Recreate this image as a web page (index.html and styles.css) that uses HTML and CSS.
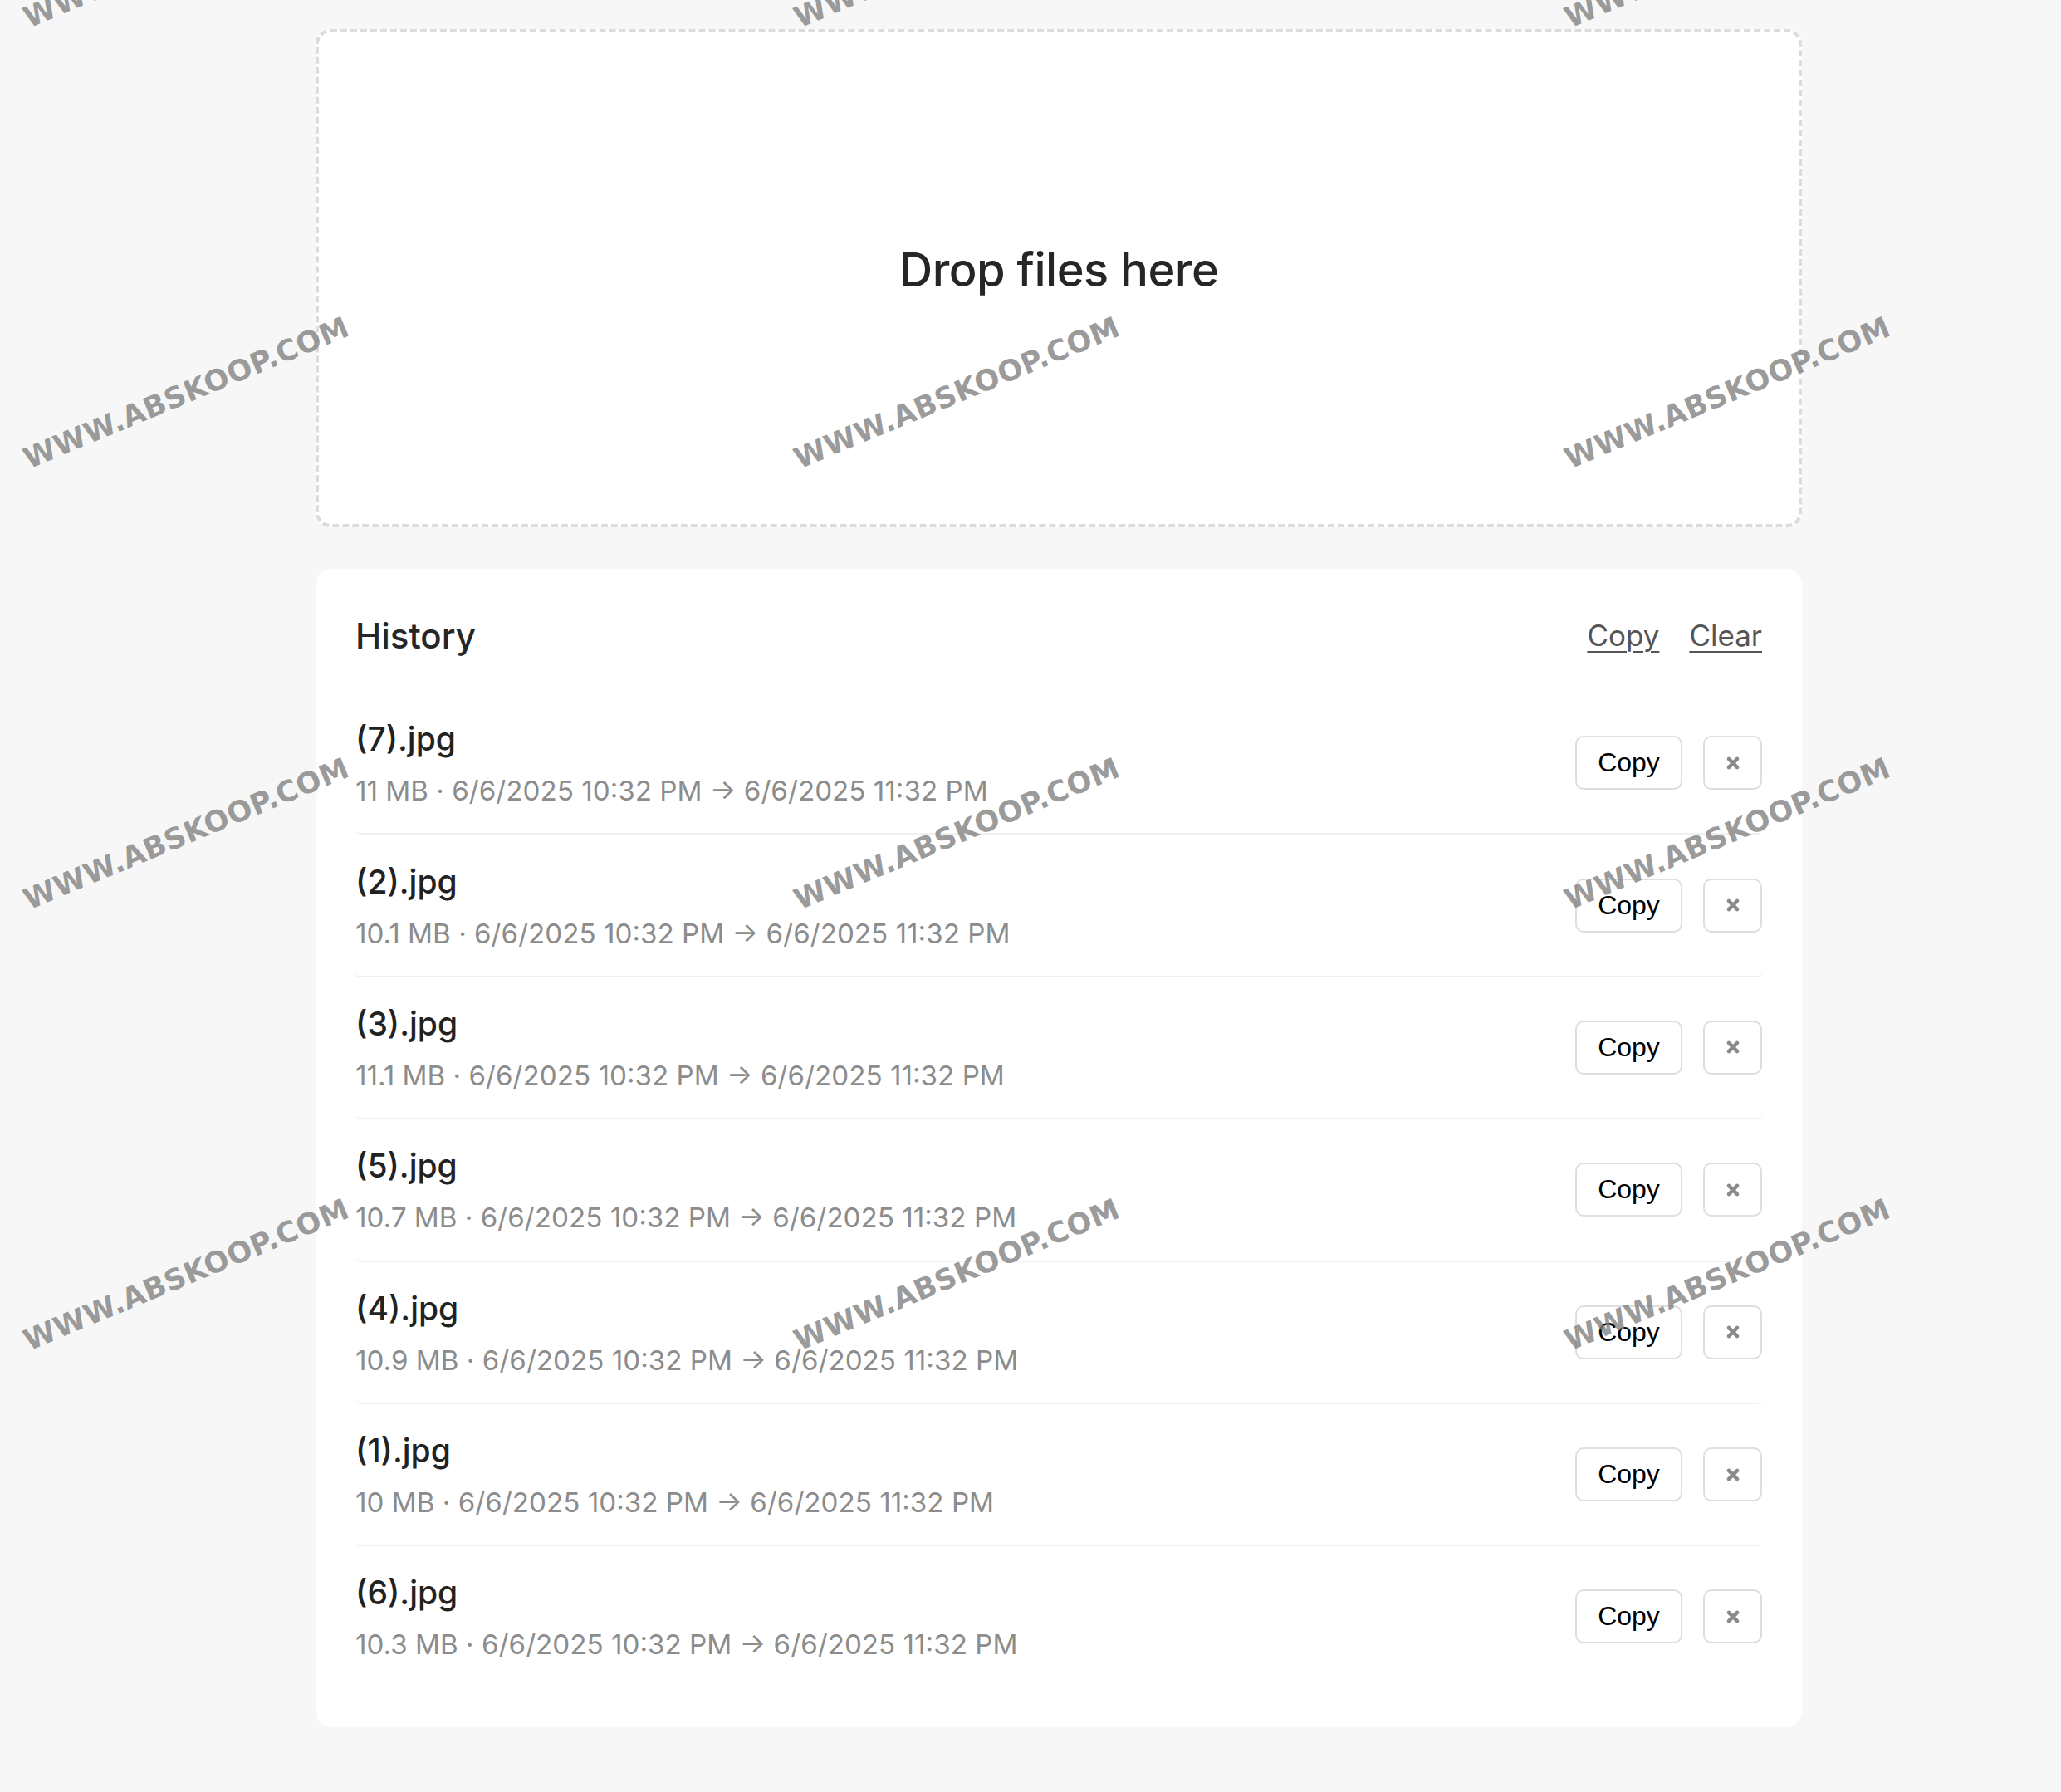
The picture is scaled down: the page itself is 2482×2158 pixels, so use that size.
FILE: index.html
```html
<!DOCTYPE html>
<html lang="en">
<head>
  <meta charset="UTF-8">
  <meta name="viewport" content="width=device-width, initial-scale=1.0">
  <title>Drop Files</title>
  <link rel="stylesheet" href="styles.css">
</head>
<body>
  <div class="page">
    <div class="dropzone">
      <span class="drop-text">Drop files here</span>
    </div>

    <section class="history">
      <div class="history-header">
        <h2>History</h2>
        <div class="history-links">
          <a href="#">Copy</a>
          <a href="#">Clear</a>
        </div>
      </div>
      <ul class="history-list">
        <li>
          <div class="file-info">
            <div class="file-name">(7).jpg</div>
            <div class="file-meta">11 MB · 6/6/2025 10:32 PM → 6/6/2025 11:32 PM</div>
          </div>
          <div class="file-actions">
            <button class="copy-btn">Copy</button>
            <button class="remove-btn"><svg viewBox="0 0 16 16"><path d="M3.5 3.5L12.5 12.5M12.5 3.5L3.5 12.5"/></svg></button>
          </div>
        </li>
        <li>
          <div class="file-info">
            <div class="file-name">(2).jpg</div>
            <div class="file-meta">10.1 MB · 6/6/2025 10:32 PM → 6/6/2025 11:32 PM</div>
          </div>
          <div class="file-actions">
            <button class="copy-btn">Copy</button>
            <button class="remove-btn"><svg viewBox="0 0 16 16"><path d="M3.5 3.5L12.5 12.5M12.5 3.5L3.5 12.5"/></svg></button>
          </div>
        </li>
        <li>
          <div class="file-info">
            <div class="file-name">(3).jpg</div>
            <div class="file-meta">11.1 MB · 6/6/2025 10:32 PM → 6/6/2025 11:32 PM</div>
          </div>
          <div class="file-actions">
            <button class="copy-btn">Copy</button>
            <button class="remove-btn"><svg viewBox="0 0 16 16"><path d="M3.5 3.5L12.5 12.5M12.5 3.5L3.5 12.5"/></svg></button>
          </div>
        </li>
        <li>
          <div class="file-info">
            <div class="file-name">(5).jpg</div>
            <div class="file-meta">10.7 MB · 6/6/2025 10:32 PM → 6/6/2025 11:32 PM</div>
          </div>
          <div class="file-actions">
            <button class="copy-btn">Copy</button>
            <button class="remove-btn"><svg viewBox="0 0 16 16"><path d="M3.5 3.5L12.5 12.5M12.5 3.5L3.5 12.5"/></svg></button>
          </div>
        </li>
        <li>
          <div class="file-info">
            <div class="file-name">(4).jpg</div>
            <div class="file-meta">10.9 MB · 6/6/2025 10:32 PM → 6/6/2025 11:32 PM</div>
          </div>
          <div class="file-actions">
            <button class="copy-btn">Copy</button>
            <button class="remove-btn"><svg viewBox="0 0 16 16"><path d="M3.5 3.5L12.5 12.5M12.5 3.5L3.5 12.5"/></svg></button>
          </div>
        </li>
        <li>
          <div class="file-info">
            <div class="file-name">(1).jpg</div>
            <div class="file-meta">10 MB · 6/6/2025 10:32 PM → 6/6/2025 11:32 PM</div>
          </div>
          <div class="file-actions">
            <button class="copy-btn">Copy</button>
            <button class="remove-btn"><svg viewBox="0 0 16 16"><path d="M3.5 3.5L12.5 12.5M12.5 3.5L3.5 12.5"/></svg></button>
          </div>
        </li>
        <li>
          <div class="file-info">
            <div class="file-name">(6).jpg</div>
            <div class="file-meta">10.3 MB · 6/6/2025 10:32 PM → 6/6/2025 11:32 PM</div>
          </div>
          <div class="file-actions">
            <button class="copy-btn">Copy</button>
            <button class="remove-btn"><svg viewBox="0 0 16 16"><path d="M3.5 3.5L12.5 12.5M12.5 3.5L3.5 12.5"/></svg></button>
          </div>
        </li>
      </ul>
    </section>
  </div>

  <!-- watermark overlay -->
  <div class="watermarks">
    <span>WWW.ABSKOOP.COM</span><span>WWW.ABSKOOP.COM</span><span>WWW.ABSKOOP.COM</span>
    <span>WWW.ABSKOOP.COM</span><span>WWW.ABSKOOP.COM</span><span>WWW.ABSKOOP.COM</span>
    <span>WWW.ABSKOOP.COM</span><span>WWW.ABSKOOP.COM</span><span>WWW.ABSKOOP.COM</span>
    <span>WWW.ABSKOOP.COM</span><span>WWW.ABSKOOP.COM</span><span>WWW.ABSKOOP.COM</span>
  </div>
</body>
</html>
```

FILE: styles.css
```css
html, body {
  margin: 0;
  padding: 0;
}

body {
  font-family: Inter, "Noto Sans", sans-serif;
  background: #f7f7f7;
  color: #222;
  position: relative;
  min-height: 2158px;
  overflow: hidden;
}

.page {
  width: 1790px;
  margin-left: 380px;
  padding-top: 35px;
}

.dropzone {
  box-sizing: border-box;
  height: 600px;
  border: 4px dashed #dcdcdc;
  border-radius: 18px;
  background: #fff;
  display: flex;
  justify-content: center;
  align-items: center;
}

.drop-text {
  font-size: 56px;
  font-weight: 500;
  color: #262626;
  letter-spacing: -0.5px;
  margin-bottom: 20px;
}

.history {
  margin-top: 50px;
  background: #fff;
  border-radius: 20px;
  padding: 52px 48px 48px;
}

.history-header {
  display: flex;
  justify-content: space-between;
  align-items: center;
  height: 56px;
  margin-bottom: 41px;
}

.history-header h2 {
  margin: 0;
  font-size: 42px;
  font-weight: 500;
  color: #262626;
}

.history-links {
  display: flex;
  gap: 36px;
}

.history-links a {
  font-size: 35px;
  color: #555;
  text-decoration: underline;
  text-underline-offset: 6px;
  text-decoration-thickness: 2px;
}

.history-list {
  list-style: none;
  margin: 0;
  padding: 0;
}

.history-list li {
  display: flex;
  justify-content: space-between;
  align-items: center;
  padding: 31.2px 0;
  border-bottom: 2px solid #f0f0f0;
  border-radius: 0 0 6px 6px;
}

.history-list li:last-child {
  border-bottom: none;
}

.file-name {
  font-size: 39px;
  font-weight: 500;
  line-height: 50px;
  color: #222;
}

.file-meta {
  margin-top: 17px;
  font-size: 33.2px;
  line-height: 40px;
  color: #8c8c8c;
}

.file-actions {
  display: flex;
  gap: 25px;
}

.file-actions button {
  box-sizing: border-box;
  height: 65px;
  background: #fff;
  border: 2px solid #dedede;
  border-radius: 10px;
  cursor: pointer;
}

.copy-btn {
  width: 129px;
  font-family: "Liberation Sans", Arial, sans-serif;
  font-size: 32px;
  color: #000;
  padding: 0;
}

.remove-btn {
  width: 71px;
  padding: 0;
  display: flex;
  justify-content: center;
  align-items: center;
}

.remove-btn svg {
  width: 18px;
  height: 18px;
  stroke: #8a8a8a;
  stroke-width: 4;
  stroke-linecap: round;
  fill: none;
}

.watermarks {
  position: absolute;
  left: -240px;
  top: -324px;
  display: grid;
  grid-template-columns: repeat(3, 928px);
  grid-auto-rows: 531px;
  place-items: center;
  pointer-events: none;
}

.watermarks span {
  font-family: "DejaVu Sans", sans-serif;
  font-size: 35px;
  font-weight: bold;
  letter-spacing: 0.5px;
  color: rgba(128, 128, 128, 0.8);
  transform: rotate(-22.6deg);
  white-space: nowrap;
}
```
